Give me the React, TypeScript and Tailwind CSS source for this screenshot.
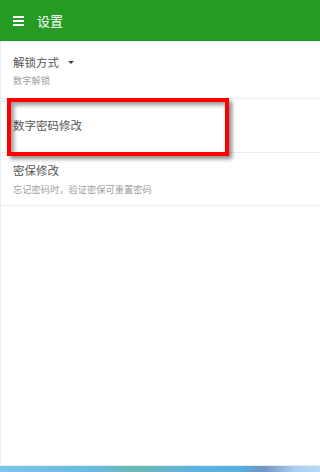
import React from "react"

const font = { fontFamily: '"Noto Sans CJK SC", "Noto Sans", sans-serif' }

export default function App() {
  return (
    <div className="relative flex h-[472px] w-full flex-col overflow-hidden bg-white" style={font}>
      {/* Toolbar */}
      <div className="flex h-[41px] shrink-0 items-center bg-[#259b24] pl-[13px]">
        <div className="flex w-[11px] flex-col gap-[2px]">
          <span className="h-[2px] w-full bg-white" />
          <span className="h-[2px] w-full bg-white" />
          <span className="h-[2px] w-full bg-white" />
        </div>
        <span className="ml-[13px] text-[13px] leading-none text-white">设置</span>
      </div>

      {/* Settings list */}
      <div className="flex flex-1 flex-col border-l border-[#e4ecf6]">
        <div className="border-b border-[#ececec] pb-[11px] pl-[12px] pt-[13px]">
          <div className="flex items-center text-[11.5px] leading-[16px] text-[#555]">
            解锁方式
            <span className="ml-[9px] h-0 w-0 border-x-[3px] border-t-[3px] border-x-transparent border-t-[#444]" />
          </div>
          <div className="mt-[3px] text-[9.25px] leading-[14px] text-[#a0a0a0]">数字解锁</div>
        </div>

        <div className="flex h-[54px] items-center border-b border-[#ececec] pl-[12px] text-[11.5px] text-[#555]">
          数字密码修改
        </div>

        <div className="border-b border-[#ececec] pb-[9px] pl-[12px] pt-[9px]">
          <div className="text-[11.5px] leading-[16px] text-[#555]">密保修改</div>
          <div className="mt-[4px] text-[9.25px] leading-[14px] text-[#a0a0a0]">忘记密码时，验证密保可重置密码</div>
        </div>

        <div className="flex-1" />
      </div>

      {/* Desktop strip below the window */}
      <div className="h-px shrink-0 bg-[#e6edf4]" />
      <div className="h-[6px] shrink-0 bg-[linear-gradient(90deg,#7cc4ea_0%,#68bade_30%,#6cb8b0_42%,#5eb2de_60%,#58aee0_75%,#7094c4_82%,#a8cdf0_92%,#b8daf6_100%)]" />

      {/* Annotation box */}
      <div className="absolute left-[7px] top-[98px] h-[58px] w-[222px] border-4 border-[#ff0000] shadow-[3px_3px_4px_rgba(0,0,0,0.45),inset_3px_3px_4px_rgba(0,0,0,0.4)]" />
    </div>
  )
}
